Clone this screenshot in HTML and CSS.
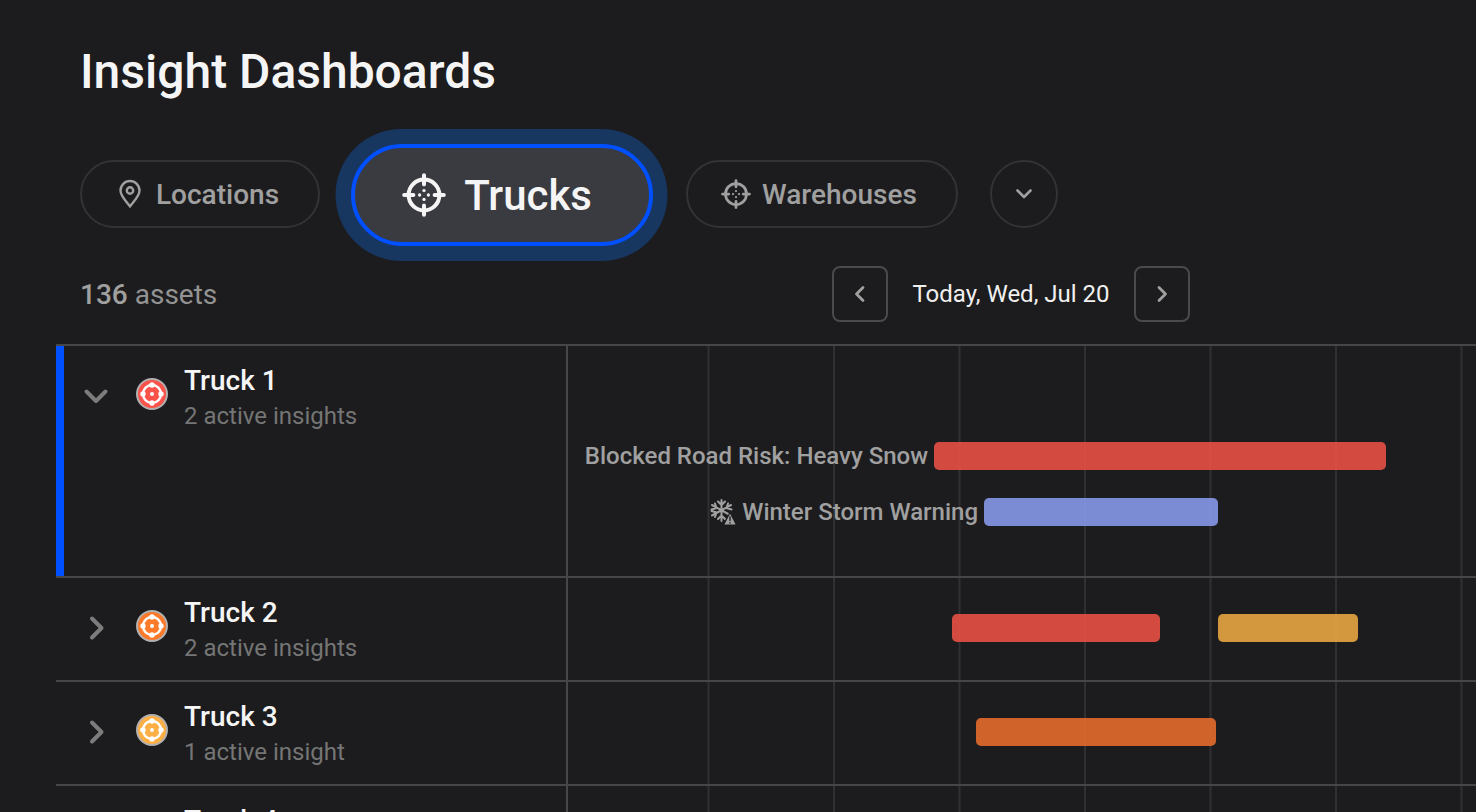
FILE: index.html
```html
<!DOCTYPE html>
<html lang="en">

<head>
    <meta charset="UTF-8">
    <title>Insight Dashboards</title>
    <link rel="stylesheet" href="styles.css">
</head>
<body>
    <svg class="defs" width="0" height="0" aria-hidden="true">
        <symbol id="crosshair" viewBox="0 0 24 24">
            <circle cx="12" cy="12" r="8.4" fill="none" stroke="currentColor" stroke-width="2.2"/>
            <path d="M12 1.200v5M12 17.800v5M1.200 12h5M17.800 12h5" fill="none" stroke="currentColor" stroke-width="2.200" stroke-linecap="round"/>
            <circle cx="12" cy="9.600" r=".9" fill="currentColor"/>
            <circle cx="12" cy="14.400" r=".9" fill="currentColor"/>
            <circle cx="9.600" cy="12" r=".9" fill="currentColor"/>
            <circle cx="14.400" cy="12" r=".9" fill="currentColor"/>
        </symbol>
        <symbol id="target" viewBox="0 0 32 32">
            <circle cx="16" cy="16" r="9" fill="none" stroke="#fff" stroke-width="2.400"/>
            <circle cx="16" cy="7" r="2.700" fill="#fff"/>
            <circle cx="16" cy="25" r="2.700" fill="#fff"/>
            <circle cx="7" cy="16" r="2.700" fill="#fff"/>
            <circle cx="25" cy="16" r="2.700" fill="#fff"/>
            <circle cx="16" cy="16" r="2" fill="#fff"/>
        </symbol>
    </svg>

    <h1>Insight Dashboards</h1>

    <div class="tabs">
        <button class="tab">
            <svg class="tab-icon" viewBox="0 0 30 30" fill="none" stroke="currentColor" stroke-width="2.4">
                <path d="M15 27.500 C12 23 5.500 17.500 5.500 11.500 A9.500 9.500 0 0 1 24.500 11.500 C24.500 17.500 18 23 15 27.500Z" stroke-linejoin="round"/>
                <circle cx="15" cy="11.500" r="3.200"/>
            </svg>
            Locations
        </button>
        <button class="tab active">
            <svg class="tab-icon"><use href="#crosshair"/></svg>
            Trucks
        </button>
        <button class="tab">
            <svg class="tab-icon"><use href="#crosshair"/></svg>
            Warehouses
        </button>
        <button class="tab more">
            <svg viewBox="0 0 20 20" width="20" height="20" fill="none" stroke="currentColor" stroke-width="2.6" stroke-linecap="round" stroke-linejoin="round">
                <path d="M3.500 6.500 10 13l6.500-6.500"/>
            </svg>
        </button>
    </div>

    <div class="toolbar">
        <div class="count"><b>136</b> assets</div>
        <div class="date-nav">
            <button class="nav-btn">
                <svg viewBox="0 0 20 20" width="20" height="20" fill="none" stroke="currentColor" stroke-width="2.8" stroke-linecap="round" stroke-linejoin="round"><path d="M13 3.500 6.500 10l6.500 6.500"/></svg>
            </button>
            <span class="date">Today, Wed, Jul 20</span>
            <button class="nav-btn">
                <svg viewBox="0 0 20 20" width="20" height="20" fill="none" stroke="currentColor" stroke-width="2.8" stroke-linecap="round" stroke-linejoin="round"><path d="M7 3.500 13.500 10 7 16.500"/></svg>
            </button>
        </div>
    </div>

    <div class="table">
        <div class="row open">
            <div class="asset">
                <svg class="chevron" viewBox="0 0 28 28" fill="none" stroke="currentColor" stroke-width="4" stroke-linecap="round" stroke-linejoin="round"><path d="M4.500 9.500 14 19l9.500-9.500"/></svg>
                <span class="status red"><svg><use href="#target"/></svg></span>
                <div class="asset-text">
                    <div class="name">Truck 1</div>
                    <div class="sub">2 active insights</div>
                </div>
            </div>
            <div class="timeline">
                <div class="track">
                    <div class="label" style="width: 366px">Blocked Road Risk: Heavy Snow</div>
                    <div class="bar bar-red" style="width: 452px"></div>
                </div>
                <div class="track">
                    <div class="label" style="width: 416px">
                        <svg class="snow" viewBox="0 0 27 28" fill="none" stroke="currentColor" stroke-width="2" stroke-linecap="round">
                            <path d="M11.500 2v21M2 7l19 10.500M21 7L2 17.500M8 3.500l3.500 3.500L15 3.500M8 21l3.500-3.500 3.500 3.500M1.500 11.500l5-1.500-1.500-4.500M21.500 11.500l-5-1.500 1.500-4.500M1.500 13l5 1.500-1.500 4.500"/>
                            <path d="M20 14.500 13.500 27h13z" fill="currentColor" stroke="#1c1c1e" stroke-width="1.200" stroke-linejoin="round"/>
                            <path d="M20 19v3.500M20 24.800v.2" stroke="#1c1c1e" stroke-width="1.400"/>
                        </svg>
                        Winter Storm Warning
                    </div>
                    <div class="bar bar-blue" style="width: 234px"></div>
                </div>
            </div>
        </div>
        <div class="row">
            <div class="asset">
                <svg class="chevron" viewBox="0 0 28 28" fill="none" stroke="currentColor" stroke-width="4" stroke-linecap="round" stroke-linejoin="round"><path d="M10 4.500 19.500 14 10 23.500"/></svg>
                <span class="status orange"><svg><use href="#target"/></svg></span>
                <div class="asset-text">
                    <div class="name">Truck 2</div>
                    <div class="sub">2 active insights</div>
                </div>
            </div>
            <div class="timeline">
                <div class="track">
                    <div class="label" style="width: 384px"></div>
                    <div class="bar bar-red" style="width: 208px"></div>
                    <div class="bar bar-amber" style="width: 140px; margin-left: 58px"></div>
                </div>
            </div>
        </div>
        <div class="row">
            <div class="asset">
                <svg class="chevron" viewBox="0 0 28 28" fill="none" stroke="currentColor" stroke-width="4" stroke-linecap="round" stroke-linejoin="round"><path d="M10 4.500 19.500 14 10 23.500"/></svg>
                <span class="status yellow"><svg><use href="#target"/></svg></span>
                <div class="asset-text">
                    <div class="name">Truck 3</div>
                    <div class="sub">1 active insight</div>
                </div>
            </div>
            <div class="timeline">
                <div class="track">
                    <div class="label" style="width: 408px"></div>
                    <div class="bar bar-rust" style="width: 240px"></div>
                </div>
            </div>
        </div>
        <div class="row">
            <div class="asset">
                <div class="asset-text offset">
                    <div class="name">Truck 4</div>
                </div>
            </div>
            <div class="timeline"></div>
        </div>
    </div>
</body>

</html>
```

FILE: styles.css
```css
html, body {
    height: 812px;
    overflow: hidden;
}

body {
    margin: 0;
    background-color: #1c1c1e;
    font-family: Roboto, "Liberation Sans", sans-serif;
    color: #fff;
}

.defs {
    position: absolute;
}

h1 {
    margin: 0;
    padding: 45px 0 0 80px;
    height: 116px;
    box-sizing: border-box;
    font-size: 48px;
    line-height: 54px;
    font-weight: 500;
    color: #f5f5f5;
}

.tabs {
    display: flex;
    align-items: center;
    gap: 32px;
    height: 102px;
    margin-top: 28px;
    padding-left: 80px;
}

.tab {
    display: flex;
    align-items: center;
    justify-content: center;
    gap: 11px;
    height: 68px;
    margin-bottom: 2px;
    padding: 0 39px 0 33px;
    background: none;
    border: 2px solid #333335;
    border-radius: 34px;
    box-sizing: border-box;
    font-family: inherit;
    font-size: 28px;
    font-weight: 500;
    color: #a0a0a0;
}

.tab-icon {
    width: 30px;
    height: 30px;
}

.tab.active {
    height: 102px;
    width: 302px;
    padding: 0 10px 0 0;
    gap: 18px;
    margin: 0 1px 0 -1px;
    background-color: #3a3b41;
    border: 4px solid #0050ff;
    border-radius: 51px;
    box-shadow: -.5px 0 0 15px #173660;
    font-size: 42px;
    color: #f5f5f5;
}

.tab.active .tab-icon {
    width: 44px;
    height: 44px;
}

.tab.more {
    width: 68px;
    padding: 0;
}

.toolbar {
    display: grid;
    grid-template-columns: 752px auto;
    align-items: center;
    height: 56px;
    margin-top: 20px;
    padding-left: 80px;
}

.count {
    font-size: 28px;
    color: #939393;
}

.count b {
    font-weight: 500;
    color: #a0a0a0;
}

.date-nav {
    display: flex;
    align-items: center;
}

.nav-btn {
    display: flex;
    align-items: center;
    justify-content: center;
    width: 56px;
    height: 56px;
    padding: 0;
    background: none;
    border: 2px solid #4a4a4c;
    border-radius: 8px;
    color: #a0a0a0;
}

.date {
    width: 246px;
    text-align: center;
    font-size: 24px;
    color: #f0f0f0;
}

.table {
    margin: 22px 0 0 56px;
    border-top: 2px solid #464648;
}

.row {
    display: flex;
    height: 102px;
    border-bottom: 2px solid #464648;
}

.row.open {
    height: 230px;
}

.asset {
    display: flex;
    align-items: flex-start;
    width: 510px;
    padding-left: 26px;
    box-sizing: border-box;
    flex-shrink: 0;
}

.row.open .asset {
    padding-left: 18px;
    border-left: 8px solid #0050ff;
}

.row.open .chevron {
    margin-top: 36px;
}

.chevron {
    width: 28px;
    height: 28px;
    margin-top: 36px;
    flex-shrink: 0;
    color: #7c7c7c;
}

.status {
    display: block;
    width: 32px;
    height: 32px;
    margin: 32px 0 0 26px;
    border: 2px solid #b0b0b0;
    border-radius: 50%;
    box-sizing: border-box;
    flex-shrink: 0;
    overflow: hidden;
}

.status svg {
    display: block;
    width: 32px;
    height: 32px;
    margin: -2px;
}

.status.red { background-color: #fb5249; }
.status.orange { background-color: #fc7a2a; }
.status.yellow { background-color: #fdae45; }

.asset-text {
    margin: 19px 0 0 16px;
}

.asset-text.offset {
    margin-left: 102px;
}

.name {
    font-size: 28px;
    line-height: 32px;
    font-weight: 500;
    color: #f5f5f5;
}

.sub {
    margin-top: 3px;
    font-size: 24px;
    line-height: 32px;
    color: #757575;
}

.timeline {
    flex: 1;
    padding-top: 36px;
    border-left: 2px solid #464648;
    background-image:
        linear-gradient(to right, #1c1c1e 139px, transparent 139px),
        linear-gradient(to right, #303032 2px, transparent 2px);
    background-size: 100% 100%, 125.5px 100%;
    background-position: 0 0, 139.5px 0;
}

.row.open .timeline {
    padding-top: 96px;
}

.track {
    display: flex;
    align-items: center;
    height: 28px;
    margin-bottom: 28px;
}

.label {
    display: flex;
    align-items: center;
    justify-content: flex-end;
    gap: 5px;
    padding-right: 6px;
    box-sizing: border-box;
    white-space: nowrap;
    flex-shrink: 0;
    font-size: 24px;
    font-weight: 500;
    color: #a0a0a0;
}

.snow {
    width: 27px;
    height: 28px;
}

.bar {
    height: 28px;
    border-radius: 5px;
    flex-shrink: 0;
}

.bar-red { background-color: rgba(231, 80, 68, .9); }
.bar-blue { background-color: rgba(134, 152, 232, .9); }
.bar-amber { background-color: rgba(232, 166, 65, .9); }
.bar-rust { background-color: rgba(227, 108, 42, .9); }
```
